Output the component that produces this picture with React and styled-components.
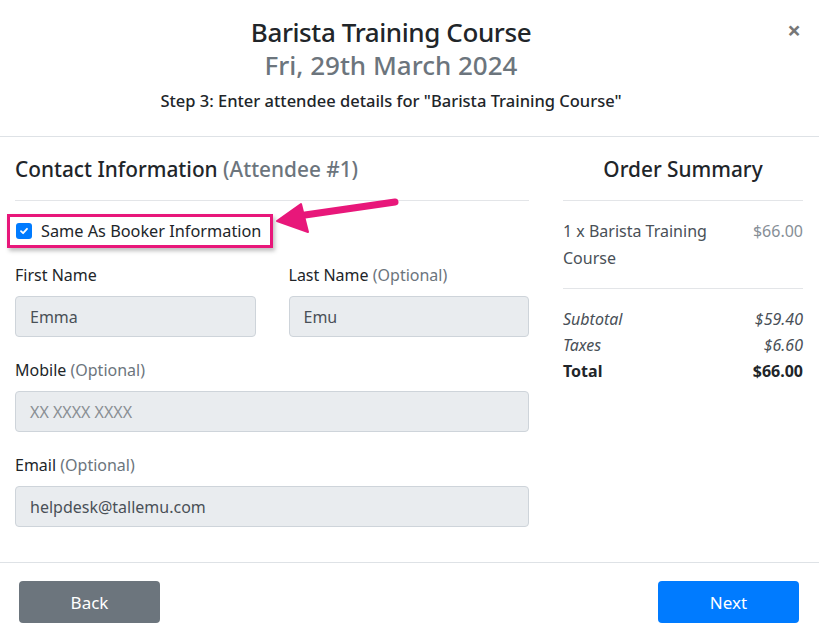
import styled, { createGlobalStyle } from "styled-components";

const GlobalStyle = createGlobalStyle`
  html, body {
    margin: 0;
    padding: 0;
    background: #fff;
  }
  body {
    font-family: "Noto Sans", "Open Sans", sans-serif;
    color: #212529;
  }
  * { box-sizing: border-box; }
`;

const App = () => {
    const fields = [
        { label: "Mobile", optional: true, value: "XX XXXX XXXX", placeholder: true },
        { label: "Email", optional: true, value: "helpdesk@tallemu.com" },
    ];

    return (
        <Modal>
            <GlobalStyle />
            <Header>
                <Title>Barista Training Course</Title>
                <DateLine>Fri, 29th March 2024</DateLine>
                <Step>Step 3: Enter attendee details for "Barista Training Course"</Step>
                <Close>×</Close>
            </Header>

            <Body>
                <Main>
                    <SectionTitle>
                        Contact Information <Muted>(Attendee #1)</Muted>
                    </SectionTitle>
                    <Divider />

                    <CheckRow>
                        <Highlight>
                            <CheckBox>
                                <svg width="10" height="10" viewBox="0 0 10 10">
                                    <path d="M2 5.2 L4.1 7.2 L8 2.8" fill="none" stroke="#fff" strokeWidth="1.8" strokeLinecap="round" strokeLinejoin="round" />
                                </svg>
                            </CheckBox>
                            <span>Same As Booker Information</span>
                        </Highlight>
                        <Arrow width="130" height="36" viewBox="0 0 130 36">
                            <path d="M118 4 L28 17" stroke="#e8177a" strokeWidth="7" strokeLinecap="round" />
                            <path d="M0 23 L24 6 L31 34 Z" fill="#e8177a" stroke="#e8177a" strokeWidth="2" strokeLinejoin="round" />
                        </Arrow>
                    </CheckRow>

                    <Row>
                        <Field>
                            <Label>First Name</Label>
                            <Input>Emma</Input>
                        </Field>
                        <Field>
                            <Label>Last Name <Muted>(Optional)</Muted></Label>
                            <Input>Emu</Input>
                        </Field>
                    </Row>

                    {fields.map((f) => (
                        <Field key={f.label} $spaced>
                            <Label>{f.label} {f.optional && <Muted>(Optional)</Muted>}</Label>
                            <Input $placeholder={f.placeholder}>{f.value}</Input>
                        </Field>
                    ))}
                </Main>

                <Side>
                    <SummaryTitle>Order Summary</SummaryTitle>
                    <Divider />
                    <ItemRow>
                        <span>1 x Barista Training Course</span>
                        <Price>$66.00</Price>
                    </ItemRow>
                    <Divider />
                    <Totals>
                        <TotalRow $italic><span>Subtotal</span><span>$59.40</span></TotalRow>
                        <TotalRow $italic><span>Taxes</span><span>$6.60</span></TotalRow>
                        <TotalRow $bold><span>Total</span><span>$66.00</span></TotalRow>
                    </Totals>
                </Side>
            </Body>

            <Footer>
                <Button $color="#6c757d">Back</Button>
                <Button $color="#007bff">Next</Button>
            </Footer>
        </Modal>
    );
};

export default App;

const Modal = styled.div`
  width: 819px;
  height: 634px;
  display: flex;
  flex-direction: column;
  background: #fff;
`;

const Header = styled.div`
  position: relative;
  height: 137px;
  padding: 15px 37px 0 0;
  border-bottom: 1px solid #dee2e6;
  text-align: center;
`;

const Title = styled.div`
  font-size: 26px;
  line-height: 34px;
  font-weight: 500;
  color: #212529;
  letter-spacing: -0.4px;
`;

const DateLine = styled.div`
  font-size: 26px;
  line-height: 32px;
  font-weight: 500;
  color: #6c757d;
`;

const Step = styled.div`
  margin-top: 10px;
  font-size: 16.5px;
  font-weight: 500;
  line-height: 20px;
`;

const Close = styled.div`
  position: absolute;
  top: 16px;
  right: 18px;
  font-size: 24px;
  line-height: 28px;
  font-weight: 700;
  color: #777;
`;

const Body = styled.div`
  flex: 1;
  display: flex;
  gap: 34px;
  padding: 17px 16px 0 15px;
  border-bottom: 1px solid #dee2e6;
`;

const Main = styled.div`
  width: 514px;
  display: flex;
  flex-direction: column;
`;

const Side = styled.div`
  flex: 1;
  display: flex;
  flex-direction: column;
`;

const SectionTitle = styled.div`
  font-size: 20.8px;
  line-height: 30px;
  font-weight: 500;
  height: 46px;
`;

const SummaryTitle = styled(SectionTitle)`
  text-align: center;
`;

const Muted = styled.span`
  color: #6c757d;
  font-weight: inherit;
`;

const Divider = styled.div`
  height: 1px;
  background: #e3e5e8;
`;

const CheckRow = styled.div`
  position: relative;
  margin-top: 13px;
  height: 34px;
  margin-left: -8px;
`;

const Highlight = styled.div`
  display: inline-flex;
  align-items: center;
  gap: 9px;
  height: 34px;
  padding: 0 9px 0 6px;
  border: 3px solid #e8177a;
  box-shadow: 2px 3px 4px rgba(0, 0, 0, 0.25);
  font-size: 16.3px;
  color: #212529;
`;

const CheckBox = styled.span`
  width: 16px;
  height: 16px;
  border-radius: 3px;
  background: #007bff;
  display: flex;
  align-items: center;
  justify-content: center;
`;

const Arrow = styled.svg`
  position: absolute;
  left: 270px;
  top: -16px;
  overflow: visible;
`;

const Row = styled.div`
  display: grid;
  grid-template-columns: 1fr 1fr;
  gap: 33px;
`;

const Field = styled.div`
  display: flex;
  flex-direction: column;
  margin-top: ${(p) => (p.$spaced ? "21px" : "15px")};
`;

const Label = styled.div`
  font-size: 16px;
  line-height: 24px;
  margin-bottom: 9px;
`;

const Input = styled.div`
  height: 41px;
  display: flex;
  align-items: center;
  padding: 0 14px;
  background: #e9ecef;
  border: 1px solid #ced4da;
  border-radius: 4px;
  font-size: 16px;
  color: ${(p) => (p.$placeholder ? "#8a8f94" : "#495057")};
`;

const ItemRow = styled.div`
  display: flex;
  justify-content: space-between;
  gap: 30px;
  padding: 17px 0 16px;
  font-size: 16px;
  line-height: 27px;
  color: #495057;
`;

const Price = styled.span`
  color: #868e96;
`;

const Totals = styled.div`
  padding-top: 17px;
`;

const TotalRow = styled.div`
  display: flex;
  justify-content: space-between;
  font-size: 16px;
  line-height: 26px;
  font-style: ${(p) => (p.$italic ? "italic" : "normal")};
  font-weight: ${(p) => (p.$bold ? 700 : 400)};
  color: ${(p) => (p.$bold ? "#212529" : "#495057")};
`;

const Footer = styled.div`
  height: 71px;
  display: flex;
  justify-content: space-between;
  align-items: flex-start;
  padding: 18px 20px 0 19px;
`;

const Button = styled.div`
  width: 141px;
  height: 42px;
  display: flex;
  align-items: center;
  justify-content: center;
  border-radius: 4px;
  background: ${(p) => p.$color};
  color: #fff;
  font-size: 17px;
`;
